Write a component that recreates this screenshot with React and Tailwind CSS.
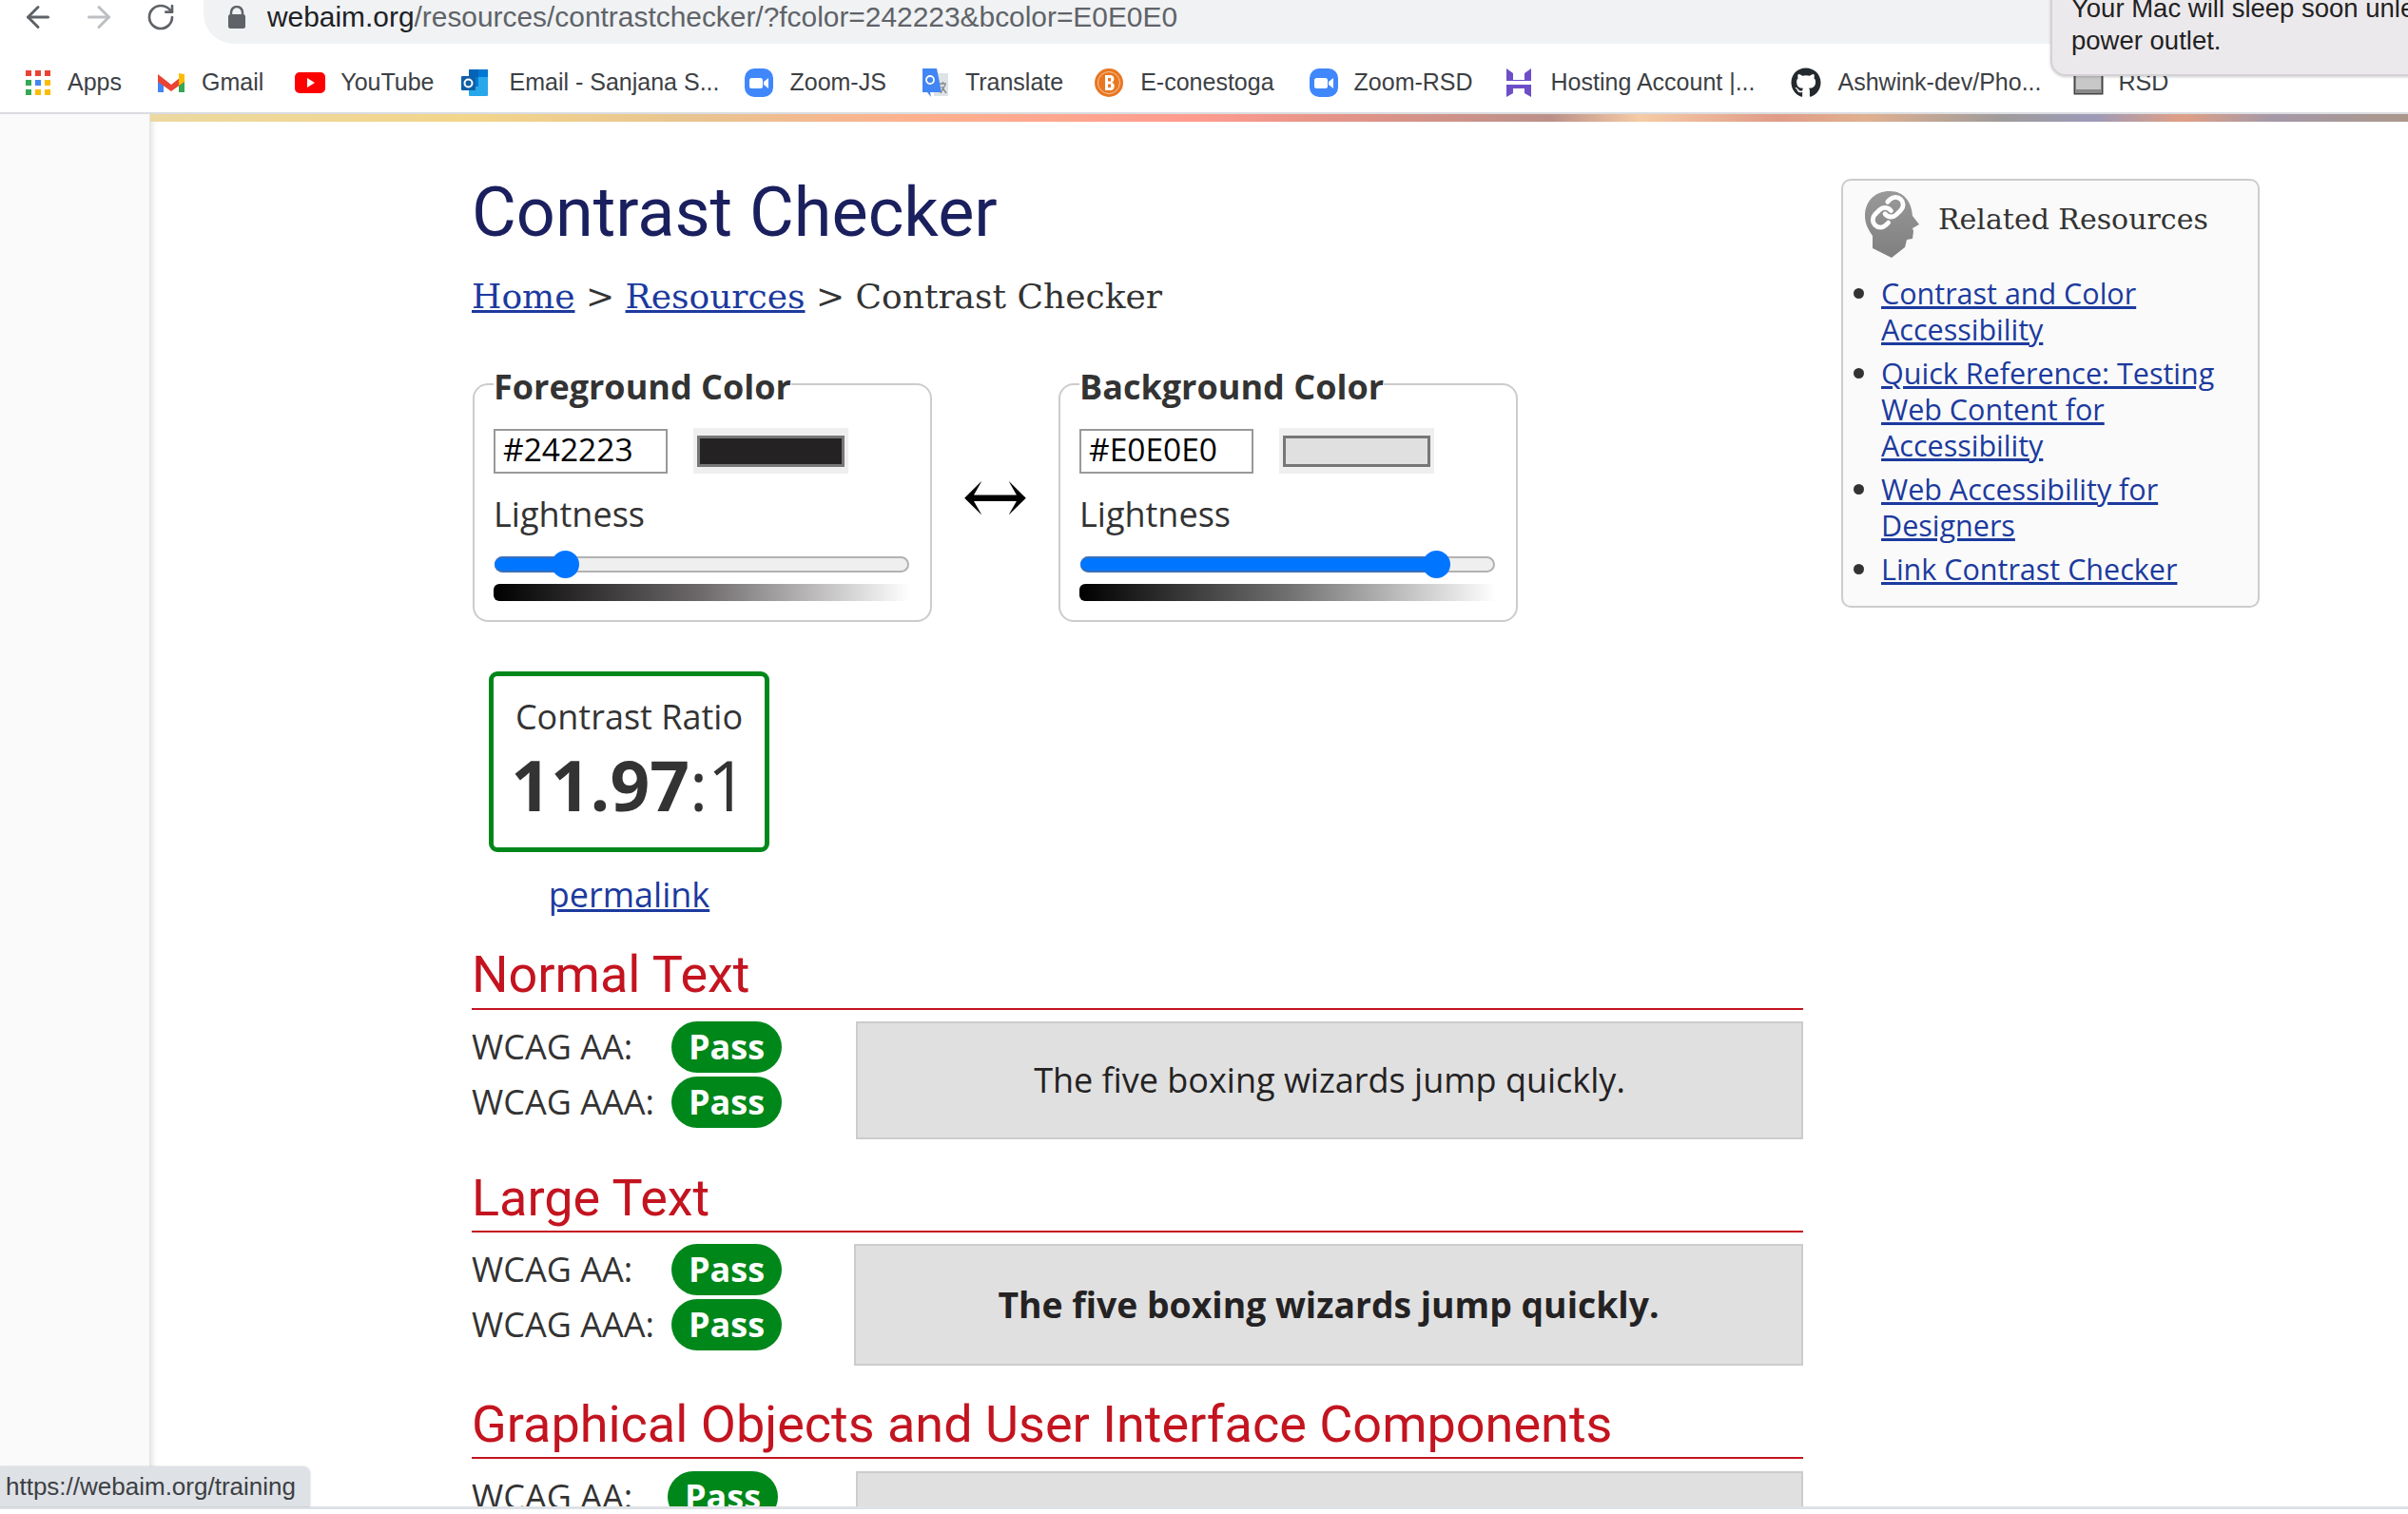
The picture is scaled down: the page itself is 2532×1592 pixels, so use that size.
import { ArrowLeft, ArrowRight, RotateCw } from 'lucide-react'
import { FaGithub } from 'react-icons/fa'

const openSans = 'font-["Open_Sans",sans-serif]'

function AppsIcon() {
  const colors = ['#ea4335', '#ea4335', '#ea4335', '#34a853', '#4285f4', '#fbbc04', '#34a853', '#fbbc04', '#fbbc04']
  return (
    <svg width="28" height="28" viewBox="0 0 28 28">
      {colors.map((c, i) => (
        <rect key={i} x={1 + (i % 3) * 10} y={1 + Math.floor(i / 3) * 10} width="6" height="6" fill={c} />
      ))}
    </svg>
  )
}

function GmailIcon() {
  return (
    <svg width="30" height="30" viewBox="0 0 30 30">
      <path d="M1 7v18h6V13z" fill="#4285f4" />
      <path d="M29 7v18h-6V13z" fill="#34a853" />
      <path d="M1 6l14 11L29 6v8L15 24 1 14z" fill="#ea4335" />
      <path d="M23 5l6 1v8l-6 4z" fill="#fbbc04" />
    </svg>
  )
}

function YoutubeIcon() {
  return (
    <svg width="32" height="32" viewBox="0 0 32 32">
      <rect x="0" y="5" width="32" height="22" rx="5" fill="#f00" />
      <path d="M13 11l8 5-8 5z" fill="#fff" />
    </svg>
  )
}

function OutlookIcon() {
  return (
    <svg width="32" height="32" viewBox="0 0 32 32">
      <rect x="9" y="2" width="20" height="28" rx="1" fill="#28a8ea" />
      <rect x="9" y="2" width="10" height="8" fill="#0364b8" />
      <rect x="19" y="2" width="10" height="8" fill="#0078d4" />
      <rect x="9" y="10" width="10" height="10" fill="#0078d4" />
      <rect x="1" y="9" width="15" height="15" rx="1" fill="#0f5fa8" />
      <circle cx="8.5" cy="16.5" r="4" fill="none" stroke="#fff" strokeWidth="2" />
    </svg>
  )
}

function ZoomIcon() {
  return (
    <svg width="32" height="32" viewBox="0 0 32 32">
      <rect x="1" y="1" width="30" height="30" rx="10" fill="#4087fc" />
      <rect x="6" y="11" width="14" height="11" rx="2.5" fill="#fff" />
      <path d="M21 15l5-4v11l-5-4z" fill="#fff" />
    </svg>
  )
}

function TranslateIcon() {
  return (
    <svg width="32" height="32" viewBox="0 0 32 32">
      <path d="M14 6h15v24H14z" fill="#dfe3e8" />
      <path d="M2 1h15l5 25H10l1 5-4-5H2z" fill="#4285f4" />
      <circle cx="10" cy="13" r="4" fill="none" stroke="#fff" strokeWidth="1.8" />
      <path d="M20 17h7M23.5 15v2M21 27l5-9M22 20l5 7" stroke="#888" strokeWidth="1.4" fill="none" />
    </svg>
  )
}

function ConestogaIcon() {
  return (
    <svg width="32" height="32" viewBox="0 0 32 32">
      <circle cx="16" cy="16" r="15" fill="#e87722" />
      <circle cx="16" cy="16" r="11.5" fill="none" stroke="#f6c79c" strokeWidth="1" />
      <path d="M12 8h6a4 4 0 0 1 1 7.6A4.4 4.4 0 0 1 18 24h-6zM15 11v3.5h3v-3.5zM15 17.500v3.500h3v-3.500z" fill="#fff" fillRule="evenodd" />
    </svg>
  )
}

function HostingIcon() {
  return (
    <svg width="32" height="32" viewBox="0 0 32 32">
      <path d="M3 1l7 5v7h12V6l7-5v13H3z" fill="#6d4ec9" />
      <path d="M3 18h26v13l-7-4v-5H10v5l-7 4z" fill="#6d4ec9" />
    </svg>
  )
}

function RsdIcon() {
  return (
    <svg width="32" height="32" viewBox="0 0 32 32">
      <rect x="1.500" y="6.500" width="29" height="21" fill="#c8c8c8" stroke="#444" strokeWidth="2" />
      <rect x="2" y="23" width="28" height="4" fill="#888" />
    </svg>
  )
}

const bookmarks = [
  { label: 'Apps', icon: <AppsIcon />, ml: 'ml-[26px]', gap: 'gap-[17px]' },
  { label: 'Gmail', icon: <GmailIcon />, ml: 'ml-[37px]', gap: 'gap-[17px]' },
  { label: 'YouTube', icon: <YoutubeIcon />, ml: 'ml-[33px]', gap: 'gap-[16px]' },
  { label: 'Email - Sanjana S...', icon: <OutlookIcon />, ml: 'ml-[27px]', gap: 'gap-[20px]' },
  { label: 'Zoom-JS', icon: <ZoomIcon />, ml: 'ml-[26px]', gap: 'gap-[16px]' },
  { label: 'Translate', icon: <TranslateIcon />, ml: 'ml-[36px]', gap: 'gap-[15px]' },
  { label: 'E-conestoga', icon: <ConestogaIcon />, ml: 'ml-[32px]', gap: 'gap-[17px]' },
  { label: 'Zoom-RSD', icon: <ZoomIcon />, ml: 'ml-[36px]', gap: 'gap-[16px]' },
  { label: 'Hosting Account |...', icon: <HostingIcon />, ml: 'ml-[32px]', gap: 'gap-[18px]' },
  { label: 'Ashwink-dev/Pho...', icon: <FaGithub size={32} color="#24292e" />, ml: 'ml-[37px]', gap: 'gap-[18px]' },
  { label: 'RSD', icon: <RsdIcon />, ml: 'ml-[33px]', gap: 'gap-[16px]' },
]

function HeadIcon() {
  return (
    <svg width="58" height="72" viewBox="0 0 58 72">
      <defs>
        <linearGradient id="head" x1="0" y1="0" x2="0" y2="1">
          <stop offset="0" stopColor="#999" />
          <stop offset="1" stopColor="#7f7f7f" />
        </linearGradient>
      </defs>
      <path
        d="M27 1C12 1 1 11 1 27c0 9 4 15 8 21l0 13 20 10 14-11 2-8 6-1 1-8-1-3 7-4-7-9C50 12 42 1 27 1z"
        fill="url(#head)"
      />
      <g transform="translate(6 4) scale(1.6)" fill="none" stroke="#fff" strokeWidth="3" strokeLinecap="round" strokeLinejoin="round">
        <path d="M10 13a5 5 0 0 0 7.540.54l3-3a5 5 0 0 0-7.070-7.070l-1.720 1.710" />
        <path d="M14 11a5 5 0 0 0-7.540-.54l-3 3a5 5 0 0 0 7.070 7.070l1.710-1.710" />
      </g>
    </svg>
  )
}

function ColorBox({ title, value, swatch, fillWidth, thumbLeft, gradient }) {
  return (
    <fieldset className="w-[483px] h-[271px] border-2 border-[#cccccc] rounded-[16px] px-[20px] shrink-0">
      <legend className={`${openSans} h-[42px] font-bold text-[36px] leading-[48px] text-[#333333]`}>{title}</legend>
      <div className="flex items-center mt-[25px]">
        <div className={`${openSans} w-[183px] h-[47px] border-2 border-[#999999] pl-[8px] text-[33.500px] leading-[38px] text-black bg-white`}>
          {value}
        </div>
        <div className="ml-[27px] w-[163px] h-[48px] bg-[#efefef] flex items-center justify-center">
          <div className={`w-[155px] h-[33px] border-[3px] border-[#777777] ${swatch}`} />
        </div>
      </div>
      <div className={`${openSans} mt-[19px] text-[36px] leading-[48px] text-[#333333]`}>Lightness</div>
      <div className="relative mt-[20px] ml-[1px] w-[436px] h-[17px] rounded-full bg-[#efefef] border-2 border-[#b2b2b2]">
        <div className={`absolute -left-[2px] -top-[2px] h-[17px] rounded-full bg-[#0075ff] border-y-2 border-[#3a6fb8] ${fillWidth}`} />
        <div className={`absolute -top-[8px] w-[29px] h-[29px] rounded-full bg-[#0075ff] ${thumbLeft}`} />
      </div>
      <div className={`mt-[12px] w-[438px] h-[18px] rounded-l-[6px] ${gradient}`} />
    </fieldset>
  )
}

function Row({ label, labelWidth }) {
  return (
    <div className="flex items-center h-[54px]">
      <span className={`${openSans} text-[36px] leading-[48px] text-[#333333] ${labelWidth}`}>{label}</span>
      <span className={`${openSans} w-[116px] h-full rounded-full bg-[#00871a] text-white font-bold text-[36px] flex items-center justify-center`}>
        Pass
      </span>
    </div>
  )
}

function Section({ title, top, pb, rowTop, labelWidth, gapClass, boxClass, textClass, text }) {
  return (
    <section className={top}>
      <h2 className={`font-["Roboto",sans-serif] text-[54px] leading-[60px] text-[#c3141f] border-b-2 border-[#c3141f] ${pb}`}>
        {title}
      </h2>
      <div className={`flex items-start ${rowTop}`}>
        <div className={`flex flex-col gap-[4px] shrink-0 ${gapClass}`}>
          <Row label="WCAG AA:" labelWidth={labelWidth} />
          <Row label="WCAG AAA:" labelWidth={labelWidth} />
        </div>
        <div className={`flex-1 bg-[#e0e0e0] border-2 border-[#cccccc] flex items-center justify-center text-[#242223] ${openSans} ${boxClass} ${textClass}`}>
          {text}
        </div>
      </div>
    </section>
  )
}

export default function App() {
  return (
    <div className="relative w-[2532px] h-[1592px] overflow-hidden bg-white flex flex-col">
      {/* Browser toolbar */}
      <div className="h-[46px] flex items-center shrink-0">
        <ArrowLeft size={36} strokeWidth={2} className="ml-[22px] text-[#5f6368] -mt-[10px]" />
        <ArrowRight size={36} strokeWidth={2} className="ml-[28px] text-[#bcbfc3] -mt-[10px]" />
        <RotateCw size={32} strokeWidth={2} className="ml-[31px] text-[#5f6368] -mt-[10px]" />
        <div className="ml-[29px] flex-1 h-[46px] bg-[#f0f2f4] rounded-bl-[32px] flex items-center font-['Liberation_Sans',sans-serif] text-[29.9px] pb-[10px]">
          <svg width="18" height="24" viewBox="0 0 18 24" className="ml-[26px]">
            <path d="M3 10V7a6 6 0 0 1 12 0v3" fill="none" stroke="#5f6368" strokeWidth="2.500" />
            <rect x="0" y="9" width="18" height="15" rx="2.500" fill="#5f6368" />
          </svg>
          <span className="ml-[23px] text-[#202124]">webaim.org</span>
          <span className="text-[#5f6368]">/resources/contrastchecker/?fcolor=242223&amp;bcolor=E0E0E0</span>
        </div>
      </div>

      {/* Bookmarks bar */}
      <div className="h-[72px] pt-[10px] flex items-center shrink-0 font-['Liberation_Sans',sans-serif] text-[25px] text-[#3c4043]">
        {bookmarks.map((b) => (
          <div key={b.label} className={`flex items-center shrink-0 ${b.ml} ${b.gap}`}>
            {b.icon}
            <span>{b.label}</span>
          </div>
        ))}
      </div>
      <div className="h-[2px] bg-[#dadce0] shrink-0" />

      {/* Page */}
      <div className="flex-1 min-h-0 flex overflow-hidden">
        <div className="w-[158px] shrink-0 bg-[#fafafa] border-r border-[#e6e6e6] shadow-[2px_0_6px_rgba(0,0,0,0.12)]" />
        <div className="flex-1 min-w-0 flex flex-col">
          <div className="h-[8px] shrink-0 bg-[linear-gradient(90deg,#ecd9a0_0%,#f3d58b_14%,#e8c490_24%,#fdb08e_34%,#ff9c8f_46%,#e79488_52%,#bb9089_62%,#f6cba5_66%,#e09c88_72%,#e0b08f_76%,#9f9b9b_82%,#9c9ab8_86%,#e09f85_90%,#a498a8_94%,#ab978a_100%)]" />
          <div className="flex pl-[338px] pt-[56px]">
            <main className="w-[1400px] shrink-0">
              <h1 className="font-['Roboto',sans-serif] text-[72px] leading-[80px] text-[#1a1f5e]">Contrast Checker</h1>
              <p className="mt-[24px] font-['DejaVu_Serif',serif] text-[36px] leading-[48px] text-[#333333]">
                <a className="underline text-[#1c3a9e]">Home</a> &gt;{' '}
                <a className="underline text-[#1c3a9e]">Resources</a> &gt; Contrast Checker
              </p>

              <div className="flex mt-[47px] ml-[1px]">
                <ColorBox
                  title="Foreground Color"
                  value="#242223"
                  swatch="bg-[#242223]"
                  fillWidth="w-[73px]"
                  thumbLeft="left-[58px]"
                  gradient="bg-[linear-gradient(90deg,#000000,#6e6a6b_50%,#ffffff)]"
                />
                <div className="w-[133px] shrink-0 flex items-center justify-center pt-[6px] font-['DejaVu_Serif',serif] text-[84px] text-black">
                  ↔
                </div>
                <ColorBox
                  title="Background Color"
                  value="#E0E0E0"
                  swatch="bg-[#e0e0e0]"
                  fillWidth="w-[375px]"
                  thumbLeft="left-[358px]"
                  gradient="bg-[linear-gradient(90deg,#000000,#707070_50%,#ffffff)]"
                />
              </div>

              <div className="ml-[18px] mt-[52px] w-[295px]">
                <div className={`${openSans} h-[190px] border-[5px] border-[#00871a] rounded-[9px] flex flex-col items-center text-[#333333]`}>
                  <div className="mt-[19px] text-[36px] leading-[48px]">Contrast Ratio</div>
                  <div className="mt-[2px] text-[73px] leading-[90px]">
                    <span className="font-bold">11.97</span>:1
                  </div>
                </div>
                <div className={`${openSans} mt-[21px] text-center text-[36px] leading-[48px]`}>
                  <a className="underline text-[#1c3a9e]">permalink</a>
                </div>
              </div>

              <Section
                title="Normal Text"
                top="mt-[30px]"
                pb="pb-[5px]"
                rowTop="mt-[12px]"
                labelWidth="w-[210px]"
                gapClass="w-[404px]"
                boxClass="h-[124px]"
                textClass="text-[36px]"
                text="The five boxing wizards jump quickly."
              />
              <Section
                title="Large Text"
                top="mt-[32px]"
                pb="pb-[4px]"
                rowTop="mt-[12px]"
                labelWidth="w-[210px]"
                gapClass="w-[402px]"
                boxClass="h-[128px]"
                textClass="text-[37.300px] font-bold"
                text="The five boxing wizards jump quickly."
              />
              <Section
                title="Graphical Objects and User Interface Components"
                top="mt-[32px]"
                pb="pb-[4px]"
                rowTop="mt-[13px]"
                labelWidth="w-[206px]"
                gapClass="w-[404px]"
                boxClass="h-[124px]"
                textClass="text-[36px]"
                text=""
              />
            </main>

            <aside className="ml-[40px] mt-[4px] w-[440px] h-[451px] shrink-0 bg-[#fafafa] border-2 border-[#cccccc] rounded-[10px]">
              <div className="flex items-center pt-[10px] pl-[22px]">
                <HeadIcon />
                <span className="ml-[20px] -mt-[12px] font-['DejaVu_Serif',serif] text-[30px] text-[#333333]">Related Resources</span>
              </div>
              <ul className={`${openSans} list-disc mt-[17px] pl-[40px] text-[30.5px] leading-[38px] text-[#333333] flex flex-col gap-[8px]`}>
                <li><a className="underline text-[#1c3a9e]">Contrast and Color<br />Accessibility</a></li>
                <li><a className="underline text-[#1c3a9e]">Quick Reference: Testing<br />Web Content for<br />Accessibility</a></li>
                <li><a className="underline text-[#1c3a9e]">Web Accessibility for<br />Designers</a></li>
                <li><a className="underline text-[#1c3a9e]">Link Contrast Checker</a></li>
              </ul>
            </aside>
          </div>
        </div>
      </div>
      <div className="h-[8px] shrink-0 bg-white border-t-[3px] border-[#dee1e6]" />

      {/* Sleep notification */}
      <div className="absolute left-[2156px] -top-[20px] w-[420px] h-[100px] bg-[#ece9ec] border-2 border-[#d4d2d4] rounded-[16px] pl-[20px] pt-[10px] font-['Liberation_Sans',sans-serif] text-[27.5px] leading-[34px] text-[#222222] shadow-[0_1px_3px_rgba(0,0,0,0.2)] whitespace-nowrap overflow-hidden">
        Your Mac will sleep soon unless plugged into a<br />power outlet.
      </div>

      {/* Link status bubble */}
      <div className="absolute left-0 top-[1542px] w-[326px] h-[42px] bg-[#dee1e6] rounded-tr-[8px] pl-[6px] flex items-center font-['Liberation_Sans',sans-serif] text-[26px] text-[#3c4043] shadow-[0_0_2px_rgba(0,0,0,0.25)]">
        https://webaim.org/training
      </div>
    </div>
  )
}
